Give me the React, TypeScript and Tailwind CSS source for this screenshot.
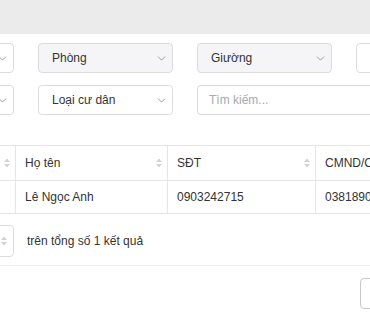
import { ChevronDown } from "lucide-react";

function SortIcon() {
  return (
    <svg width="8" height="12" viewBox="0 0 8 12" className="text-[#d2d2d6]">
      <path d="M4 1.5L7 5H1z" fill="currentColor" />
      <path d="M4 10.5L1 7h6z" fill="currentColor" />
    </svg>
  );
}

function SelectBox({ label, disabled }: { label?: string; disabled?: boolean }) {
  return (
    <div
      className={`flex h-[30px] w-[135px] shrink-0 items-center justify-between rounded-[4px] border border-[#dcdce0] pl-[13px] pr-[4px] ${
        disabled ? "bg-[#f5f5f7]" : "bg-white"
      }`}
    >
      <span className="text-[#333]">{label}</span>
      <ChevronDown size={13} strokeWidth={1.5} className="text-[#888]" />
    </div>
  );
}

const cols = [
  { label: "", width: "w-[137px]" },
  { label: "Họ tên", width: "w-[152px]" },
  { label: "SĐT", width: "w-[148px]" },
  { label: "CMND/CCCD", width: "w-[160px]" },
];

const row = ["", "Lê Ngọc Anh", "0903242715", "038189012345"];

export default function App() {
  return (
    <div className="h-[320px] w-[370px] overflow-hidden bg-white font-['Liberation_Sans',Arial,sans-serif] text-[12px] text-[#333]">
      <div className="h-[34px] bg-[#ebebeb]" />

      {/* Filters */}
      <div className="-ml-[121px] mt-[9px] flex flex-col gap-[12px]">
        <div className="flex gap-[24px]">
          <SelectBox />
          <SelectBox label="Phòng" disabled />
          <SelectBox label="Giường" disabled />
          <SelectBox label="Trạng thái" />
        </div>
        <div className="flex gap-[24px]">
          <SelectBox />
          <SelectBox label="Loại cư dân" />
          <div className="flex h-[30px] w-[320px] shrink-0 items-center rounded-[4px] border border-[#dcdce0] bg-white pl-[11px]">
            <span className="text-[#a8a8ae]">Tìm kiếm...</span>
          </div>
        </div>
      </div>

      {/* Table */}
      <div className="-ml-[121px] mt-[30px] w-max border-t border-[#e6e6ea]">
        <div className="flex h-[35px] border-b border-[#e6e6ea]">
          {cols.map((c, i) => (
            <div
              key={i}
              className={`flex shrink-0 items-center justify-between border-r border-[#e6e6ea] pl-[9px] pr-[4px] ${c.width}`}
            >
              <span>{c.label}</span>
              <SortIcon />
            </div>
          ))}
        </div>
        <div className="flex h-[33px] border-b border-[#e6e6ea]">
          {row.map((v, i) => (
            <div
              key={i}
              className={`flex shrink-0 items-center border-r border-[#e6e6ea] pl-[9px] ${cols[i].width}`}
            >
              {v}
            </div>
          ))}
        </div>
      </div>

      {/* Pagination */}
      <div className="mt-[11px] flex items-center border-b border-[#eeeef0] pb-[8px]">
        <div className="-ml-[40px] flex h-[32px] w-[54px] shrink-0 items-center justify-end rounded-[4px] border border-[#dcdce0] pr-[5px]">
          <SortIcon />
        </div>
        <span className="ml-[13px]">trên tổng số 1 kết quả</span>
      </div>

      <div className="mt-[12px] flex justify-end">
        <div className="-mr-[40px] h-[31px] w-[50px] rounded-[4px] border border-[#c8c8cc]" />
      </div>
    </div>
  );
}
